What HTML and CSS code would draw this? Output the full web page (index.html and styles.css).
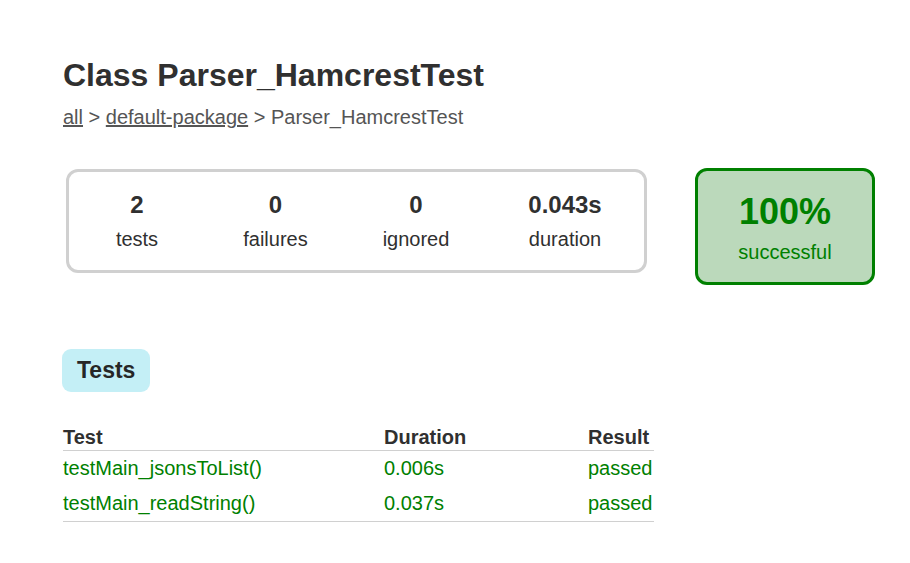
FILE: index.html
```html
<!DOCTYPE html>
<html lang="en">
<head>
<meta charset="utf-8">
<title>Test results - Class Parser_HamcrestTest</title>
<link rel="stylesheet" href="styles.css">
</head>
<body>
<div class="content">
  <h1 class="title">Class Parser_HamcrestTest</h1>
  <div class="breadcrumbs">
    <a href="#">all</a> &gt; <a href="#">default-package</a> &gt; Parser_HamcrestTest
  </div>

  <div class="summary">
    <div class="summary-group">
      <div class="info-box info-tests">
        <div class="counter">2</div>
        <p class="label">tests</p>
      </div>
      <div class="info-box info-failures">
        <div class="counter">0</div>
        <p class="label">failures</p>
      </div>
      <div class="info-box info-ignored">
        <div class="counter">0</div>
        <p class="label">ignored</p>
      </div>
      <div class="info-box info-duration">
        <div class="counter">0.043s</div>
        <p class="label">duration</p>
      </div>
    </div>
    <div class="success-rate">
      <div class="percent">100%</div>
      <p class="label">successful</p>
    </div>
  </div>

  <div class="tab-links">
    <div class="tab">Tests</div>
  </div>

  <table class="tests">
    <colgroup>
      <col class="col-test">
      <col class="col-duration">
      <col class="col-result">
    </colgroup>
    <thead>
      <tr><th>Test</th><th>Duration</th><th>Result</th></tr>
    </thead>
    <tbody>
      <tr class="success"><td>testMain_jsonsToList()</td><td>0.006s</td><td>passed</td></tr>
      <tr class="success"><td>testMain_readString()</td><td>0.037s</td><td>passed</td></tr>
    </tbody>
  </table>
</div>
</body>
</html>
```

FILE: styles.css
```css
html, body {
  margin: 0;
  padding: 0;
  background: #ffffff;
}

body {
  font-family: "Liberation Sans", Arial, sans-serif;
  font-size: 20px;
  line-height: 23px;
  color: #303030;
}

.content {
  padding: 57px 20px 30px 63px;
}

.title {
  margin: 0;
  font-size: 32px;
  line-height: 37px;
  font-weight: bold;
  white-space: nowrap;
}

.breadcrumbs {
  margin-top: 12px;
  color: #555555;
  white-space: nowrap;
}

.breadcrumbs a {
  color: #555555;
  text-decoration: underline;
}

.summary {
  margin-top: 39px;
  display: flex;
  align-items: flex-start;
}

.summary-group {
  flex-shrink: 0;
  margin-top: 1px;
  margin-left: 3px;
  display: flex;
  border: 3px solid #d0d0d0;
  border-radius: 12px;
}

.info-box {
  padding: 19px 0 19px 0;
  text-align: center;
}

.info-tests { width: 136px; }
.info-failures { width: 141px; }
.info-ignored { width: 140px; }
.info-duration { width: 158px; }

.counter {
  font-size: 24px;
  line-height: 28px;
  font-weight: bold;
  margin-bottom: 9px;
}

.label {
  margin: 0;
  font-size: 20px;
  line-height: 23px;
}

.success-rate {
  flex-shrink: 0;
  margin-left: 48px;
  width: 174px;
  padding: 20px 0 18px 0;
  text-align: center;
  background-color: #bbd9bb;
  border: 3px solid #008000;
  border-radius: 12px;
  color: #008000;
}

.percent {
  font-size: 36px;
  line-height: 41px;
  font-weight: bold;
  margin-bottom: 9px;
}

.tab-links {
  margin-top: 64px;
  display: flex;
}

.tab {
  margin-left: -1px;
  padding: 9px 15px;
  font-size: 23px;
  line-height: 25px;
  font-weight: bold;
  background-color: #c4eff6;
  border-radius: 9px;
  color: #262626;
}

.tests {
  margin-top: 34px;
  border-collapse: collapse;
  table-layout: fixed;
  width: 591px;
}

.col-test { width: 321px; }
.col-duration { width: 204px; }
.col-result { width: 66px; }

.tests th,
.tests td {
  padding: 0;
  text-align: left;
  white-space: nowrap;
}

.tests th {
  font-weight: bold;
  padding-bottom: 1px;
  border-bottom: 1px solid #d0d0d0;
}

.tests td {
  padding-top: 6px;
  padding-bottom: 6px;
}

.tests tbody tr:last-child td {
  border-bottom: 1px solid #d0d0d0;
}

.tests tr.success td {
  color: #008000;
}
```
